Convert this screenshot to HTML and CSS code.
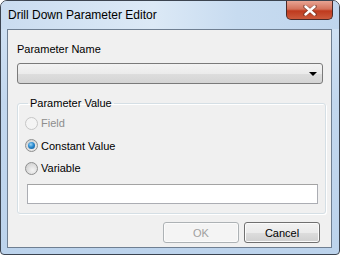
FILE: index.html
```html
<!DOCTYPE html>
<html lang="en">

<head>
    <meta charset="UTF-8">
    <meta name="viewport" content="width=device-width, initial-scale=1.0">
    <title>Drill Down Parameter Editor</title>
    <link rel="stylesheet" href="styles.css">
</head>

<body>

    <div class="window">
        <!-- Barra de titulo -->
        <div class="titlebar">
            <span class="title">Drill Down Parameter Editor</span>
            <div class="close-btn">
                <svg width="14" height="11" viewBox="0 0 14 11">
                    <path d="M2 1.5 L12 9.5 M12 1.5 L2 9.5" stroke="#4a2a22" stroke-width="4" stroke-linecap="round" opacity="0.45"/>
                    <path d="M2.5 1.5 L11.5 9.5 M11.5 1.5 L2.5 9.5" stroke="#ffffff" stroke-width="2.4" stroke-linecap="round"/>
                </svg>
            </div>
        </div>

        <div class="client">
            <div class="field-label">Parameter Name</div>
            <div class="combo">
                <span class="combo-arrow"></span>
            </div>

            <fieldset class="group">
                <legend>Parameter Value</legend>

                <label class="radio-row disabled">
                    <span class="radio"></span>
                    <span>Field</span>
                </label>
                <label class="radio-row">
                    <span class="radio checked"><span class="dot"></span></span>
                    <span>Constant Value</span>
                </label>
                <label class="radio-row">
                    <span class="radio"></span>
                    <span>Variable</span>
                </label>

                <div class="text-input"></div>
            </fieldset>

            <div class="buttons">
                <button class="btn disabled">OK</button>
                <button class="btn">Cancel</button>
            </div>
        </div>
    </div>

</body>

</html>
```

FILE: styles.css
```css
body {
    margin: 0;
    font-family: "Liberation Sans", Arial, sans-serif;
    font-size: 11px;
    color: #000;
    background-color: #ffffff;
}

.window {
    width: 340px;
    height: 255px;
    box-sizing: border-box;
    border: 1px solid #3c4450;
    border-radius: 7px 7px 4px 4px;
    background: linear-gradient(180deg, #d3e3f4 0%, #c2d7ee 40%, #bcd3ec 100%);
    display: flex;
    flex-direction: column;
    overflow: hidden;
}

.titlebar {
    height: 28px;
    display: flex;
    align-items: flex-start;
    background: linear-gradient(90deg, #cadcf0 0%, #dce9f6 45%, #c7dbf0 70%, #bfd5ed 100%);
}

.title {
    font-size: 12px;
    color: #000;
    padding: 7px 0 0 7px;
}

.close-btn {
    margin-left: auto;
    margin-right: 6px;
    width: 47px;
    height: 19px;
    box-sizing: border-box;
    border: 1px solid #4a2a28;
    border-top: none;
    border-radius: 0 0 5px 5px;
    background: linear-gradient(180deg, #e8a493 0%, #d4725b 45%, #bf3a1e 55%, #cc5a3c 100%);
    display: flex;
    align-items: center;
    justify-content: center;
}

.client {
    margin: 0 7px 6px 6px;
    flex: 1;
    border: 1px solid #6f7f92;
    background-color: #f0f0f0;
    padding: 0 8px 0 9px;
}

.field-label {
    margin-top: 13px;
    line-height: 13px;
}

.combo {
    margin-top: 7px;
    height: 21px;
    box-sizing: border-box;
    border: 1px solid #7a7a7a;
    border-radius: 3px;
    background: linear-gradient(180deg, #f3f3f3 0%, #ebebeb 50%, #dddddd 51%, #d4d4d4 100%);
    display: flex;
    align-items: center;
    justify-content: flex-end;
    padding-right: 5px;
}

.combo-arrow {
    width: 0;
    height: 0;
    border-left: 4px solid transparent;
    border-right: 4px solid transparent;
    border-top: 4px solid #000;
}

.group {
    margin: 13px 0 0 0;
    padding: 2px 7px 8px 7px;
    border: 1px solid #d5dfe5;
    border-radius: 3px;
    box-shadow: inset 1px 1px 0 #ffffff, 1px 1px 0 #ffffff;
    height: 117px;
    box-sizing: border-box;
}

.group legend {
    padding: 0 2px;
    margin-left: 3px;
    line-height: 13px;
}

.radio-row {
    display: flex;
    align-items: center;
    gap: 3px;
    height: 22.5px;
}

.radio-row.disabled {
    color: #8d8d8d;
}

.radio {
    width: 13px;
    height: 13px;
    box-sizing: border-box;
    border-radius: 50%;
    border: 1px solid #8e8f8f;
    background: radial-gradient(circle at 60% 65%, #f4f4f4 0%, #dcdcdc 55%, #c8c8c8 100%);
    display: flex;
    align-items: center;
    justify-content: center;
}

.radio-row.disabled .radio {
    border-color: #c6c6c6;
    background: #f4f4f4;
}

.dot {
    width: 7px;
    height: 7px;
    border-radius: 50%;
    background: radial-gradient(circle at 40% 35%, #9fd6f4 0%, #2a8ad0 45%, #0d4f8a 100%);
}

.text-input {
    margin-top: 4px;
    height: 20px;
    box-sizing: border-box;
    border: 1px solid #abadb3;
    border-top-color: #a3a3a3;
    background-color: #ffffff;
    width: 291px;
    margin-left: 2px;
}

.buttons {
    display: flex;
    justify-content: flex-end;
    gap: 5px;
    margin-top: 8px;
    padding-right: 3px;
}

.btn {
    width: 76px;
    height: 21px;
    box-sizing: border-box;
    font-family: "Liberation Sans", Arial, sans-serif;
    font-size: 11px;
    color: #000;
    border: 1px solid #707070;
    border-radius: 3px;
    background: linear-gradient(180deg, #f2f2f2 0%, #ebebeb 50%, #dddddd 51%, #cfcfcf 100%);
    box-shadow: inset 0 0 0 1px #fbfbfb;
    padding: 0;
}

.btn.disabled {
    color: #a0a0a0;
    border-color: #adb2b5;
    background: #f4f4f4;
}
```
